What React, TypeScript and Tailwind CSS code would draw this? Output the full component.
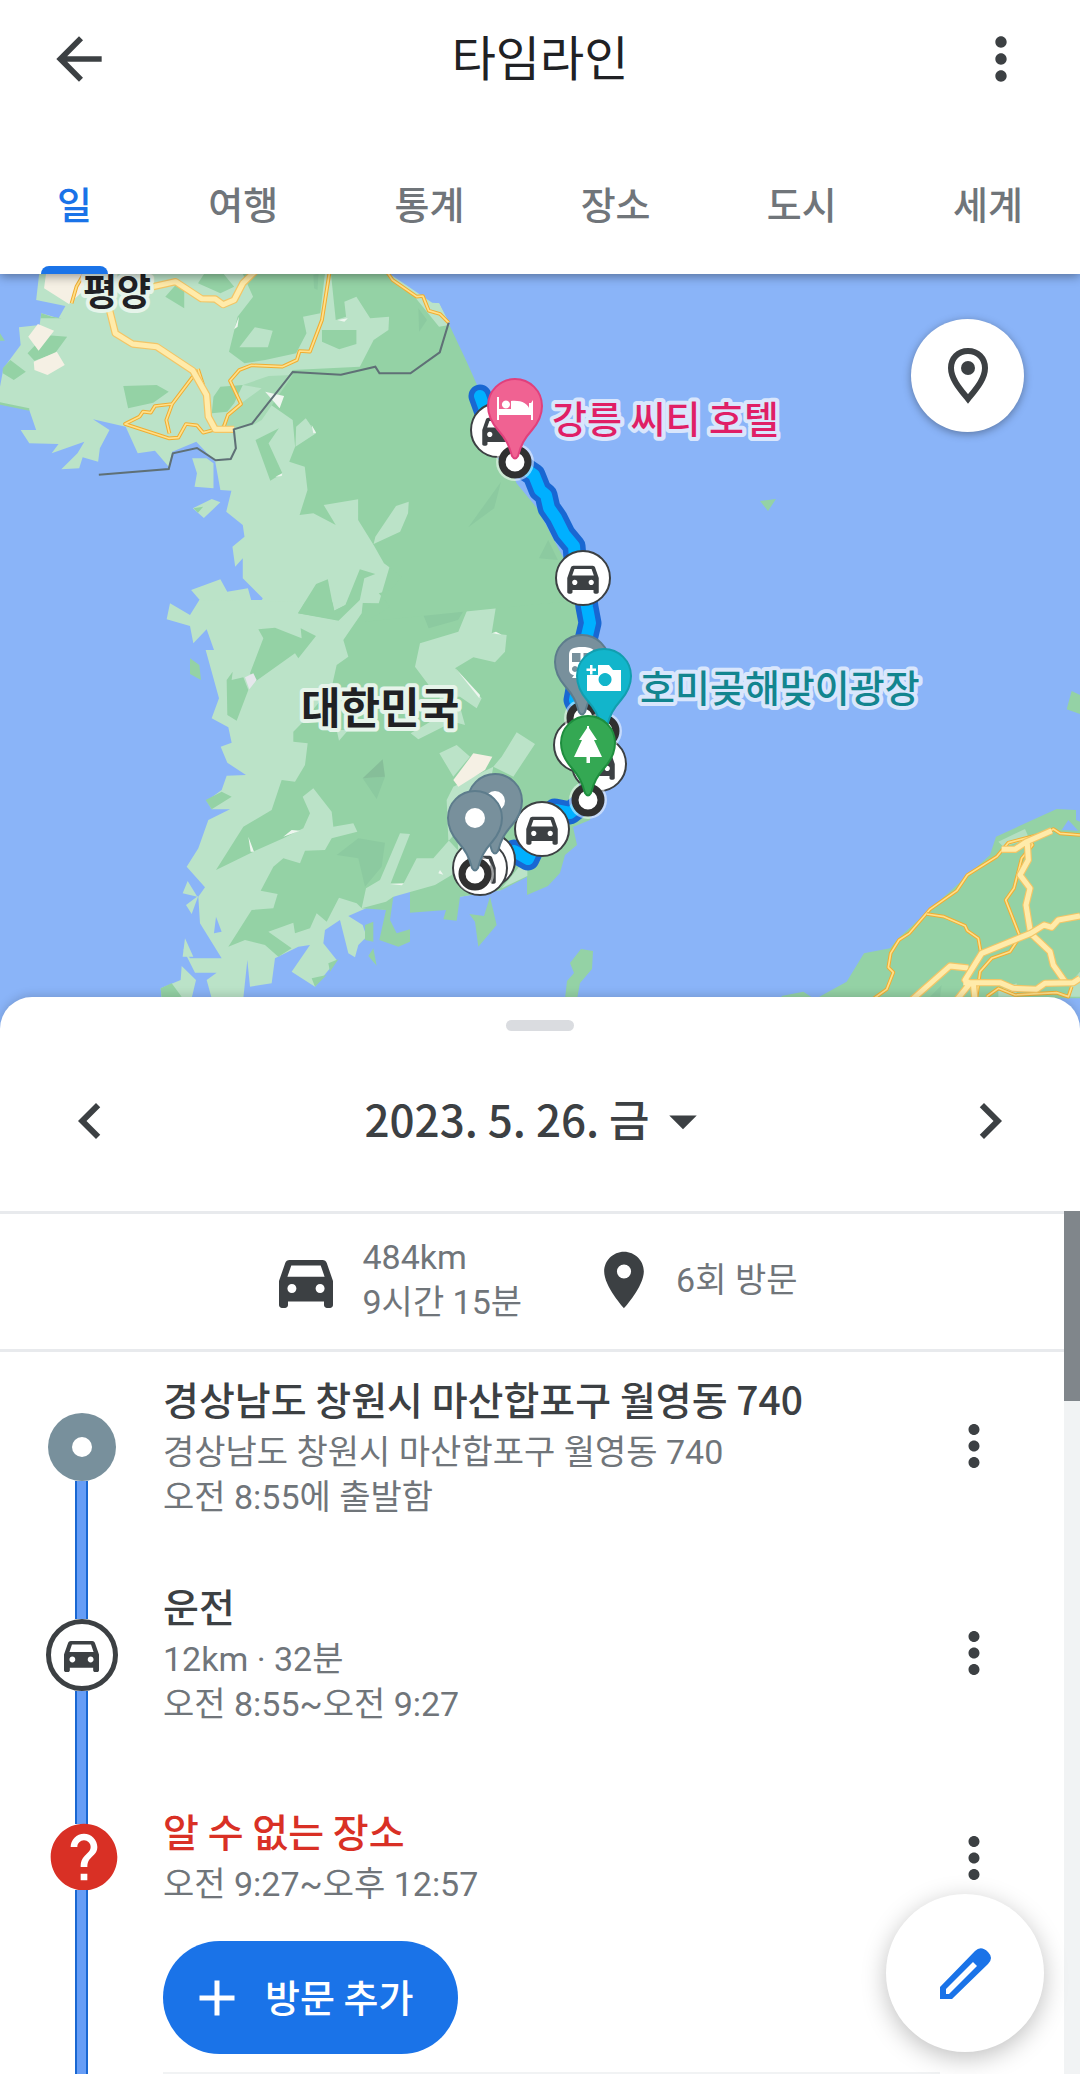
import {
  MdAdd,
  MdArrowBack,
  MdArrowDropDown,
  MdChevronLeft,
  MdChevronRight,
  MdHelp,
  MdMoreVert,
  MdPlace,
} from 'react-icons/md'

const tabs = ['일', '여행', '통계', '장소', '도시', '세계']

const CAR_PATH =
  'M18.92 6.01C18.72 5.42 18.16 5 17.5 5h-11c-.66 0-1.21.42-1.42 1.01L3 12v8c0 .55.45 1 1 1h1c.55 0 1-.45 1-1v-1.2h12v1.2c0 .55.45 1 1 1h1c.55 0 1-.45 1-1v-8l-2.08-5.99zM7.3 16c-.83 0-1.5-.67-1.5-1.5S6.47 13 7.3 13s1.5.67 1.5 1.5S8.13 16 7.3 16zm9.4 0c-.83 0-1.5-.67-1.5-1.5s.67-1.5 1.5-1.5 1.5.67 1.5 1.5-.67 1.5-1.5 1.5zM5.8 10.6l1.3-3.8h9.8l1.3 3.8H5.8z'

const PIN_PATH =
  'M-27 0A27 27 0 0 1 27 0C27 10 23 17 17 24C9 33 6 39 3 50Q0 55 -3 50C-6 39 -9 33 -17 24C-23 17 -27 10 -27 0Z'

const ROUTE =
  'M480 396L494 435L515 462L534 475L540 490L546 495L549 508L556 518L564 534L574 546L575 558L583 578L587 607L590 623L586 640L575 700L583 718L603 731L588 799L570 813L555 810L542 829L528 859L514 851L475 874'

const cars = [
  { x: 498, y: 430 },
  { x: 583, y: 578 },
  { x: 581, y: 745 },
  { x: 599, y: 764 },
  { x: 542, y: 829 },
  { x: 488, y: 860 },
  { x: 480, y: 868 },
]

const stops = [
  { x: 515, y: 462 },
  { x: 583, y: 718 },
  { x: 603, y: 731 },
  { x: 588, y: 800 },
  { x: 475, y: 874 },
]

function CarIcon({ className }: { className: string }) {
  return (
    <svg viewBox="3 5 18 16" className={className} fill="currentColor" aria-hidden="true">
      <path d={CAR_PATH} />
    </svg>
  )
}

function Pin({ x, y, fill, stroke, children }: { x: number; y: number; fill: string; stroke: string; children: React.ReactNode }) {
  return (
    <g transform={`translate(${x} ${y})`}>
      <path d={PIN_PATH} fill={fill} stroke={stroke} strokeWidth="2" />
      {children}
    </g>
  )
}

function RoadThin({ d }: { d: string }) {
  return (
    <g fill="none" strokeLinejoin="round">
      <path d={d} stroke="#f0ad32" strokeWidth="11" />
      <path d={d} stroke="#ffe08a" strokeWidth="5" />
    </g>
  )
}

function RoadWide({ d }: { d: string }) {
  return (
    <g fill="none" strokeLinejoin="round">
      <path d={d} stroke="#f3c566" strokeWidth="22" />
      <path d={d} stroke="#ffebaa" strokeWidth="15" />
    </g>
  )
}

function Map() {
  return (
    <svg
      viewBox="0 274 1080 756"
      className="block w-full bg-[#8ab4f8] font-['Noto_Sans_CJK_KR',sans-serif]"
      role="img"
      aria-label="대한민국 지도"
    >
      {/* South of the peninsula */}
      <g transform="translate(140 600) scale(0.33333)">
        <path
          fill="#bbe3c8"
          d="M178 0L150 45L90 10L80 58L150 78L160 130L200 88L222 150L197 150L237 295L215 355L265 382L275 428L242 440L262 488L318 525L260 527L245 570L200 603L215 628L270 628L205 660L175 745L140 800L195 862L175 890L180 970L245 1075L150 1075L128 1045L165 1118L230 1118L200 1140L215 1195L310 1195L322 1080L330 1160L395 1150L405 1075L475 1040L510 1035L455 1115L525 1160L590 1080L550 1030L555 990L600 960L625 1060L645 1072L655 1035L680 1010L668 975L625 948L685 922L738 930L760 890L810 865L960 890L1085 870L1100 0Z"
        />
        <path
          fill="#94d2a5"
          d="M680 -100L665 40L610 120L625 170L590 195L575 262L485 370L460 395L460 425L503 430L495 495L465 545L425 540L395 630L310 680L228 810L340 755L430 715L490 685L510 640L488 590L520 565L575 635L580 680L640 670L652 695L575 715L555 750L495 752L480 790L430 775L400 800L362 872L413 882L400 925L335 930L265 1040L315 1020L375 1035L415 1070L455 1045L385 995L460 968L465 1000L510 985L530 940L560 965L597 893L650 910L665 925L738 930L718 1020L775 1040L810 1025L810 988L770 1000L750 960L760 890L810 865L810 938L918 930L910 958L950 962L960 890L1085 870L1161 831L1161 885L1224 858L1260 819L1275 765L1311 735L1299 681L1350 660L1380 480L1284 300L1311 150L1320 0L1310 -100Z"
        />
        <path
          fill="#bbe3c8"
          d="M1057 -45L990 10L955 95L840 130L825 200L870 260L960 320L975 375L940 365L835 418L812 400L880 360L900 290L960 290L1010 325L1025 295L945 205L1000 172L1065 187L1095 155L1100 105L1055 100L1075 -25ZM575 -10L585 32L610 25L625 -10ZM898 460L950 435L990 470L940 530ZM1085 470L1130 397L1185 432L1120 530L1060 500ZM940 560L920 600L925 720L1000 800L1060 500ZM665 925L678 865L720 840L780 700L810 702L752 850L790 852L830 775L880 775L950 695L960 810L885 855L760 890L738 905ZM590 390L625 390L597 422ZM1085 865L1162 770L1162 828ZM128 880L143 843L172 890ZM138 915L175 887L155 942ZM62 1165L122 1140L125 1098L168 1140L155 1195L65 1195ZM128 1070L135 1015L160 1070Z"
        />
        <path
          fill="#94d2a5"
          d="M355 88L405 83L485 115L482 85L528 108L475 175L465 160L345 245L330 220L370 115ZM278 215L260 240L262 345L290 362L325 270L310 232L275 240ZM150 175L178 195L183 240L150 222ZM197 600L245 575L275 590L215 628ZM475 40L595 60L655 0L672 -65L705 -78L660 -92L617 15L583 32L563 -62L528 -48ZM1050 890L1070 975L1015 1040L1005 965L988 942L1032 948ZM685 1068L700 1045L710 1097ZM675 975L700 965L700 1025L675 1020ZM62 1165L95 1150L125 1190L65 1195ZM515 1135L560 1125L525 1160ZM565 1090L595 1078L570 1115Z"
        />
        <path fill="#8ab4f8" d="M222 1000L228 950L245 995Z" />
        <path fill="#8ccaa0" d="M668 535L735 530L710 597ZM590 765L655 715L735 728L725 800L675 860L655 775ZM850 45L951 25L969 -45L1152 -92L1165 -5L1068 -45L985 10L954 60L866 85Z" />
        <path fill="#86be99" d="M668 535L728 478L735 530Z" />
        <path fill="#f5f0e4" d="M940 540L1000 460L1057 470L1035 510L955 560Z" />
        <path fill="#e5e7eb" d="M315 232L340 220L350 240L328 268Z" />
        <path fill="#eef6ef" d="M430 710L455 690L480 692ZM325 710L342 755L332 755ZM945 203L1020 285L1018 295ZM1055 100L1068 95L1085 104ZM750 852L792 850L785 856ZM895 820L900 810L910 824Z" />
      </g>

      {/* North of the peninsula */}
      <g transform="translate(0 270) scale(0.34435 0.33333)">
        <path
          fill="#bbe3c8"
          d="M115 0L105 90L190 108L170 145L120 130L115 165L55 172L60 225L10 295L0 350V402L85 420L105 480L60 480L85 520L170 522L150 550L245 515L225 550L178 598L230 595L240 562L285 575L290 535L318 480L270 448L365 470L400 550L450 542L490 590L500 545L570 515L625 575L640 660L672 662L657 725L705 765L710 800L675 830L683 890L705 865L705 925L763 985L740 1030L720 955L660 965L640 928L555 960L580 990L1100 1000L1300 300L1305 165L1275 100L1255 98L1115 0ZM558 565H600L620 580V655L565 650L572 610ZM560 715L615 687L640 697L592 744Z"
        />
        <path
          fill="#94d2a5"
          d="M960 0L975 150L1005 140L1000 95L1035 80L1075 145L1130 140L1128 180L1085 210L1045 290L850 300L780 400L850 450L857 530L840 575L885 590L893 660L870 735L910 730L975 765L940 705L1040 688L1040 750L1085 825L1115 880L1168 920L1135 960L1100 970L1133 1010L1060 1055L1684 990L1635 861L1560 715L1500 640L1420 430L1379 330L1353 270L1305 165L1275 170L1200 75L1110 0ZM700 0L735 80L690 140L665 245L710 280L770 270L860 250L890 190L880 140L930 130L945 0ZM935 180L1035 180V222L985 238L935 215ZM575 40L640 70L680 50L640 0H600ZM480 80L510 45L535 55V115ZM120 130L150 140L180 145H118ZM80 250L130 195L195 200L160 250L100 272ZM8 295L30 270L75 305L40 330L8 310ZM358 348L455 345L490 365L445 398L372 415ZM620 380L640 350L705 345L680 400L660 425L615 430ZM742 510L810 475L780 520L820 610L785 632ZM0 397L85 415V422L0 404ZM0 190L14 212H0ZM562 715L590 710L575 728ZM865 1030L918 942L952 928L970 1022L1003 1005L1045 898L1090 912L1058 925L1045 990L983 1052Z"
        />
        <path fill="#bbe3c8" d="M695 232L740 172L792 182L778 232ZM860 470L888 445L918 490L858 530ZM1085 822L1090 800L1150 708L1187 695L1185 730L1162 785ZM1300 150L1250 100H1275L1305 160Z" />
        <path fill="#a6dab5" d="M705 345L780 318L850 315L760 450L735 465L680 480L640 470L700 400L760 355Z" />
        <path fill="#8ccaa0" d="M1360 772L1455 635L1435 715ZM1215 115L1240 150L1217 185ZM910 15L925 10L922 60L912 55ZM1565 865L1592 810L1620 870Z" />
        <path fill="#f5f0e4" d="M135 0L128 55L200 102L245 60V0ZM82 200L110 162L157 182L112 242ZM98 275L165 245L188 285L138 315L100 300Z" />
        <path fill="#eef6ef" d="M980 150L1010 145L1000 155ZM690 150L694 140L690 170L680 178ZM770 365L825 378L812 415ZM905 465L918 488L910 490ZM800 620L820 610L818 618Z" />
        <RoadThin d="M250 0L222 50L208 100" />
        <RoadThin d="M958 0L935 150L900 245L870 243L862 270L820 290L730 286L695 300L668 332L700 402L662 435L650 470" />
        <RoadThin d="M1120 0L1140 30L1210 80L1228 78L1245 122L1278 132L1303 158" />
        <RoadThin d="M575 297L590 345M560 320L500 402L450 408L438 428L415 425L405 440L363 462L490 505L518 503L540 462L572 466L590 488L620 480M500 402L483 450L492 490" />
        <RoadWide d="M445 50L510 35L585 86L625 87L648 104L680 90L705 40L745 0" />
        <RoadWide d="M312 60L318 120L335 190L385 222L455 230L560 302L600 375L605 440L625 478H680" />
        <path
          fill="none"
          stroke="#5f7076"
          strokeWidth="6"
          d="M287 614L490 597L502 550L572 534L626 571L670 567L685 535L679 478L732 461L850 306L990 314L1090 290L1102 310H1192L1277 247L1303 158"
        />
      </g>

      {/* Islands and the Japanese coast */}
      <path fill="#94d2a5" d="M760 501L776 499L768 511ZM581 949L593 951L592 969L580 983L577 999H565L567 981L574 973L570 963Z" />
      <g transform="translate(740 640) scale(0.33333)">
        <path fill="#94d2a5" d="M230 1075L320 1025L372 940L450 925L475 895L750 645L768 590L950 507L1008 510V540L1020 545V1075ZM125 1068L190 1055L220 1075H125ZM995 153L1020 165V222L980 208Z" />
        <path fill="#b4dfc2" d="M775 605L855 567L863 585L860 600L790 620ZM990 1030L1020 995V1070H985ZM775 1050L830 1030V1070H775Z" />
        <path fill="#8ab4f8" d="M965 570L985 540L1015 572Z" />
        <path fill="#8ccaa0" d="M570 1070L605 1035L600 1070Z" />
        <RoadThin d="M395 1080L440 1048L460 997L445 982L452 940L477 900L508 880L570 808L650 752L682 705L770 650L805 608L925 577L940 567L960 580L1020 585" />
        <RoadThin d="M560 822L612 830L675 857L682 872L715 895L722 935" />
        <RoadThin d="M870 600L878 615L845 655L822 745L797 780L840 890L810 935L755 955L720 995L710 1070" />
        <RoadThin d="M740 1070L775 1045L825 1065L950 1058L985 1070L995 1040" />
        <RoadWide d="M515 1080L630 978L685 984M785 628L825 628L860 605L935 572M862 610L865 660L840 705L870 745L858 795L872 880L930 935L940 975L975 1025" />
        <RoadWide d="M650 1080L690 1030L675 1020L725 940L872 880L912 855L935 862L955 840L1020 828M670 1028L780 1028L820 1045L890 1048L915 1030L1000 1028L1020 1015M700 1030L705 1080" />
      </g>

      {/* Travelled route */}
      <g fill="none" strokeLinecap="round" strokeLinejoin="round">
        <path d={ROUTE} stroke="#1967d2" strokeWidth="23" />
        <path d={ROUTE} stroke="#00b0ff" strokeWidth="12" />
      </g>
      {cars.map((car) => (
        <g key={`${car.x}-${car.y}`} transform={`translate(${car.x} ${car.y})`}>
          <circle r="27" fill="#fff" stroke="#3c4043" strokeWidth="2" />
          <path d={CAR_PATH} fill="#3c4043" transform="translate(-21 -21) scale(1.75)" />
        </g>
      ))}
      {stops.map((stop) => (
        <g key={`${stop.x}-${stop.y}`}>
          <circle cx={stop.x} cy={stop.y} r="19" fill="#fff" fillOpacity="0.5" />
          <circle cx={stop.x} cy={stop.y} r="13" fill="#fff" stroke="#303030" strokeWidth="7" />
        </g>
      ))}
      <Pin x={515} y={406} fill="#f06292" stroke="#e0407c">
        <path fill="#fff" d="M-18 -9H-16V3H-3V5H14V-3H16L18 -6V14H16V9H-16V14H-18ZM-4 3V-5C5 -6 14 -3 15 5H-4ZM-9 -5.500a4 4 0 1 1 -.1 0Z" />
      </Pin>
      <Pin x={582} y={662} fill="#78909c" stroke="#5d7c8c">
        <path fill="#fff" fillRule="evenodd" d="M0 -15C-9 -15 -13 -13 -13 -7V8C-13 11 -10 13 -8 13L-10 16H10L8 13C11 13 13 11 13 8V-7C13 -13 9 -15 0 -15ZM-10 -9H-1.500V0H-10ZM1.500 -9H10V0H1.500ZM-7 4a3 3 0 1 1 -.1 0ZM7 4a3 3 0 1 1 -.1 0Z" />
      </Pin>
      <Pin x={604} y={676} fill="#12b5cb" stroke="#129eaf">
        <path fill="#fff" fillRule="evenodd" d="M-17 -1H-6V-11H5L9 -6H17V15H-17ZM1 -3a6.500 6.500 0 1 0 .1 0ZM-14 -11h2.500v3.500h3.500v2.500h-3.500v3.500h-2.500v-3.500h-3.500v-2.500h3.500Z" />
      </Pin>
      <Pin x={588} y={743} fill="#34a853" stroke="#1e8e3e">
        <path fill="#fff" d="M-1 -17H1V-15L9 -3H6L14 14H2V20H-1.500V14H-14L-6 -3H-9L-1 -15Z" />
      </Pin>
      <Pin x={495} y={801} fill="#78909c" stroke="#5d7c8c">
        <circle r="10" fill="#fff" />
      </Pin>
      <Pin x={475} y={818} fill="#78909c" stroke="#5d7c8c">
        <circle r="10" fill="#fff" />
      </Pin>

      <g strokeLinejoin="round" paintOrder="stroke">
        <text x="83" y="306" fontSize="37" fontWeight="700" fill="#202124" stroke="#e6f4ea" strokeWidth="8">평양</text>
        <text x="301" y="724" fontSize="43" fontWeight="700" fill="#202124" stroke="#e6f4ea" strokeWidth="8">대한민국</text>
        <text x="552" y="433" fontSize="38" fontWeight="500" fill="#e01f66" stroke="#d9e6fc" strokeWidth="8">강릉 씨티 호텔</text>
        <text x="640" y="702" fontSize="38" fontWeight="500" fill="#12858f" stroke="#d9e6fc" strokeWidth="8">호미곶해맞이광장</text>
      </g>
    </svg>
  )
}

function Segment({ className }: { className: string }) {
  return <div className={`w-[13px] border-x-2 border-[#1967d2] bg-[#669df6] ${className}`} />
}

function MoreButton() {
  return (
    <button type="button" aria-label="옵션 더보기" className="mt-[70px] mr-[57px] flex h-12 w-[67px] items-center justify-center self-start">
      <MdMoreVert size={66} />
    </button>
  )
}

const titleClass = 'mb-1.5 text-[39px] leading-[52px] font-medium'
const detailClass = "font-['Roboto','Noto_Sans_CJK_KR',sans-serif] text-[34px] leading-[45px] text-[#70757a]"

export default function App() {
  return (
    <div className="flex min-h-screen flex-col bg-white font-['Noto_Sans_CJK_KR',sans-serif] text-[#3c4043]">
      <header className="relative z-10 bg-white shadow-[0_2px_10px_rgba(0,0,0,0.4)]">
        <div className="flex h-[118px] items-center justify-between px-[45px]">
          <button type="button" aria-label="뒤로">
            <MdArrowBack size={68} />
          </button>
          <h1 className="pb-2 text-5xl text-[#202124]">타임라인</h1>
          <button type="button" aria-label="메뉴">
            <MdMoreVert size={68} />
          </button>
        </div>
        <nav className="flex h-[156px] justify-between px-[41px]">
          {tabs.map((tab, index) => (
            <a
              key={tab}
              href={`#${tab}`}
              className={`relative px-4 pt-[58px] text-[38px] leading-[54px] font-medium ${index === 0 ? 'text-[#1a73e8]' : 'text-[#70757a]'}`}
            >
              {tab}
              {index === 0 && <span className="absolute inset-x-0 bottom-0 h-2 rounded-t-lg bg-[#1a73e8]" />}
            </a>
          ))}
        </nav>
      </header>

      <section className="relative">
        <Map />
        <button
          type="button"
          aria-label="장소 표시"
          className="absolute top-[45px] right-14 flex size-[113px] items-center justify-center rounded-full bg-white shadow-[0_2px_8px_rgba(0,0,0,0.35)]"
        >
          <svg viewBox="0 0 40 56" className="h-14 w-10" aria-hidden="true">
            <path fill="none" stroke="currentColor" strokeWidth="6" d="M20 3C10 3 3 10.500 3 20C3 31 12 41 20 51C28 41 37 31 37 20C37 10.500 30 3 20 3Z" />
            <circle cx="20" cy="20" r="7" fill="currentColor" />
          </svg>
        </button>
      </section>

      <main className="relative -mt-[33px] flex flex-1 flex-col rounded-t-[32px] bg-white shadow-[0_-2px_10px_rgba(0,0,0,0.15)]">
        <div className="mx-auto mt-[23px] h-[11px] w-[68px] rounded-full bg-[#dadce0]" />
        <div className="flex h-[180px] items-center justify-between px-[54px]">
          <button type="button" aria-label="이전 날짜">
            <MdChevronLeft size={72} />
          </button>
          <button type="button" className="flex items-center text-[44px] font-medium">
            <span className="pb-1.5">2023. 5. 26. 금</span>
            <MdArrowDropDown size={66} />
          </button>
          <button type="button" aria-label="다음 날짜">
            <MdChevronRight size={72} />
          </button>
        </div>

        <div className="flex flex-1">
          <div className="min-w-0 flex-1">
            <div className={`flex h-[141px] items-center justify-center border-y-[3px] border-[#e8eaed] pb-[3px] pl-3 ${detailClass}`}>
              <CarIcon className="mt-2 mr-[30px] w-[54px] text-[#3c4043]" />
              <p>
                484km
                <br />
                9시간 15분
              </p>
              <MdPlace size={68} className="ml-[68px] text-[#3c4043]" />
              <p className="ml-[18px]">6회 방문</p>
            </div>

            <ul>
              <li className="flex h-[207px]">
                <div className="flex w-[163px] flex-col items-center pt-[61px]">
                  <div className="flex size-[68px] items-center justify-center rounded-full bg-[#78909c]">
                    <span className="size-5 rounded-full bg-white" />
                  </div>
                  <Segment className="flex-1" />
                </div>
                <div className="flex-1 pt-5">
                  <h2 className={titleClass}>경상남도 창원시 마산합포구 월영동 740</h2>
                  <p className={detailClass}>경상남도 창원시 마산합포구 월영동 740</p>
                  <p className={detailClass}>오전 8:55에 출발함</p>
                </div>
                <MoreButton />
              </li>
              <li className="flex h-[205px]">
                <div className="flex w-[163px] flex-col items-center">
                  <Segment className="h-[60px]" />
                  <div className="flex size-[72px] items-center justify-center rounded-full border-[5px] border-[#3c4043]">
                    <CarIcon className="mt-1 w-[35px]" />
                  </div>
                  <Segment className="flex-1" />
                </div>
                <div className="flex-1 pt-5">
                  <h2 className={titleClass}>운전</h2>
                  <p className={detailClass}>12km · 32분</p>
                  <p className={detailClass}>오전 8:55~오전 9:27</p>
                </div>
                <MoreButton />
              </li>
              <li className="flex">
                <div className="flex w-[163px] flex-col items-center">
                  <Segment className="h-[60px]" />
                  <MdHelp size={80} className="-my-[7px] ml-1 text-[#d93025]" />
                  <Segment className="flex-1" />
                </div>
                <div className="flex-1 pt-10">
                  <h2 className={`${titleClass} text-[#d93025]`}>알 수 없는 장소</h2>
                  <p className={detailClass}>오전 9:27~오후 12:57</p>
                  <button
                    type="button"
                    className="mt-[34px] flex h-[113px] items-center gap-[18px] rounded-full bg-[#1a73e8] pr-[45px] pl-6 text-[38px] font-medium text-white"
                  >
                    <MdAdd size={60} />
                    <span className="pb-1">방문 추가</span>
                  </button>
                  <div className="mt-[18px] border-t-2 border-[#f1f3f4]" />
                </div>
                <MoreButton />
              </li>
            </ul>
          </div>
          <div className="w-4 bg-[#f1f3f4]">
            <div className="h-[190px] bg-[#80868b]" />
          </div>
        </div>
      </main>

      <button
        type="button"
        aria-label="수정"
        className="fixed right-9 bottom-[22px] z-10 flex size-[158px] items-center justify-center rounded-full bg-white shadow-[0_6px_24px_rgba(0,0,0,0.25)]"
      >
        <svg viewBox="0 0 55 55" className="size-[55px]" fill="#1a73e8" aria-hidden="true">
          <path fillRule="evenodd" d="M2 41L37 5Q43 -1 50 6Q56 12 50 18L14 53H2ZM8 43V48H11L39 20L35 16Z" />
        </svg>
      </button>
    </div>
  )
}
